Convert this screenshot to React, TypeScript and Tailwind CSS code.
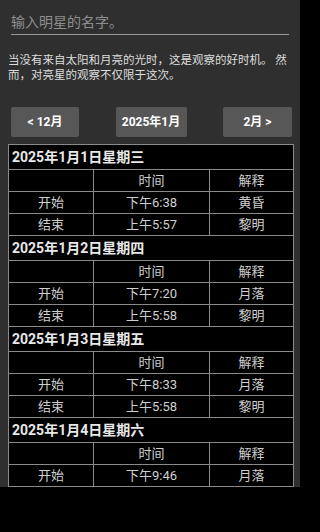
import { Fragment } from "react";

interface Row { label: string; time: string; note: string; }
interface Day { date: string; rows: Row[]; }

const days: Day[] = [
  { date: "2025年1月1日星期三", rows: [{ label: "开始", time: "下午6:38", note: "黄昏" }, { label: "结束", time: "上午5:57", note: "黎明" }] },
  { date: "2025年1月2日星期四", rows: [{ label: "开始", time: "下午7:20", note: "月落" }, { label: "结束", time: "上午5:58", note: "黎明" }] },
  { date: "2025年1月3日星期五", rows: [{ label: "开始", time: "下午8:33", note: "月落" }, { label: "结束", time: "上午5:58", note: "黎明" }] },
  { date: "2025年1月4日星期六", rows: [{ label: "开始", time: "下午9:46", note: "月落" }] },
];

const font = { fontFamily: "Roboto, 'Noto Sans CJK SC', sans-serif" };

function Cell({ children }: { children?: React.ReactNode }) {
  return (
    <div className="bg-black h-[21px] flex items-center justify-center text-[13px] text-[#cfcfcf] leading-none">
      {children}
    </div>
  );
}

export default function App() {
  return (
    <div className="w-full h-[532px] bg-black overflow-hidden" style={font}>
      <div className="w-[300px] bg-[#2f2f2f]">
        <div className="mx-[11px] pt-[12px] pb-[2px] border-b border-[#9a9a9a]">
          <div className="text-[14px] leading-[20px] text-[#8e8e8e]">输入明星的名字。</div>
        </div>

        <p className="mt-[18px] px-2 text-[11.5px] leading-[15px] text-[#dedede]">
          当没有来自太阳和月亮的光时，这是观察的好时机。 然而，对亮星的观察不仅限于这次。
        </p>

        <div className="mt-[24px] mx-[8px] flex justify-between pl-[3px]">
          <button className="w-[68px] h-[30px] rounded-[2px] bg-[#575757] text-white text-[12px] font-bold">&lt; 12月</button>
          <button className="w-[71px] h-[30px] rounded-[2px] bg-[#575757] text-white text-[12px] font-bold">2025年1月</button>
          <button className="w-[69px] h-[30px] rounded-[2px] bg-[#575757] text-white text-[12px] font-bold">2月 &gt;</button>
        </div>

        <div className="mt-[7px] ml-2 w-[286px] grid grid-cols-[84px_115px_83px] gap-px p-px bg-[#8a8a8a]">
          {days.map((d) => (
            <Fragment key={d.date}>
              <div className="col-span-3 bg-black h-[24px] flex items-center pl-[3px] text-[14px] font-bold text-[#e8e8e8]">
                {d.date}
              </div>
              <Cell />
              <Cell>时间</Cell>
              <Cell>解释</Cell>
              {d.rows.map((r) => (
                <Fragment key={r.label}>
                  <Cell>{r.label}</Cell>
                  <Cell>{r.time}</Cell>
                  <Cell>{r.note}</Cell>
                </Fragment>
              ))}
            </Fragment>
          ))}
        </div>
      </div>
    </div>
  );
}
